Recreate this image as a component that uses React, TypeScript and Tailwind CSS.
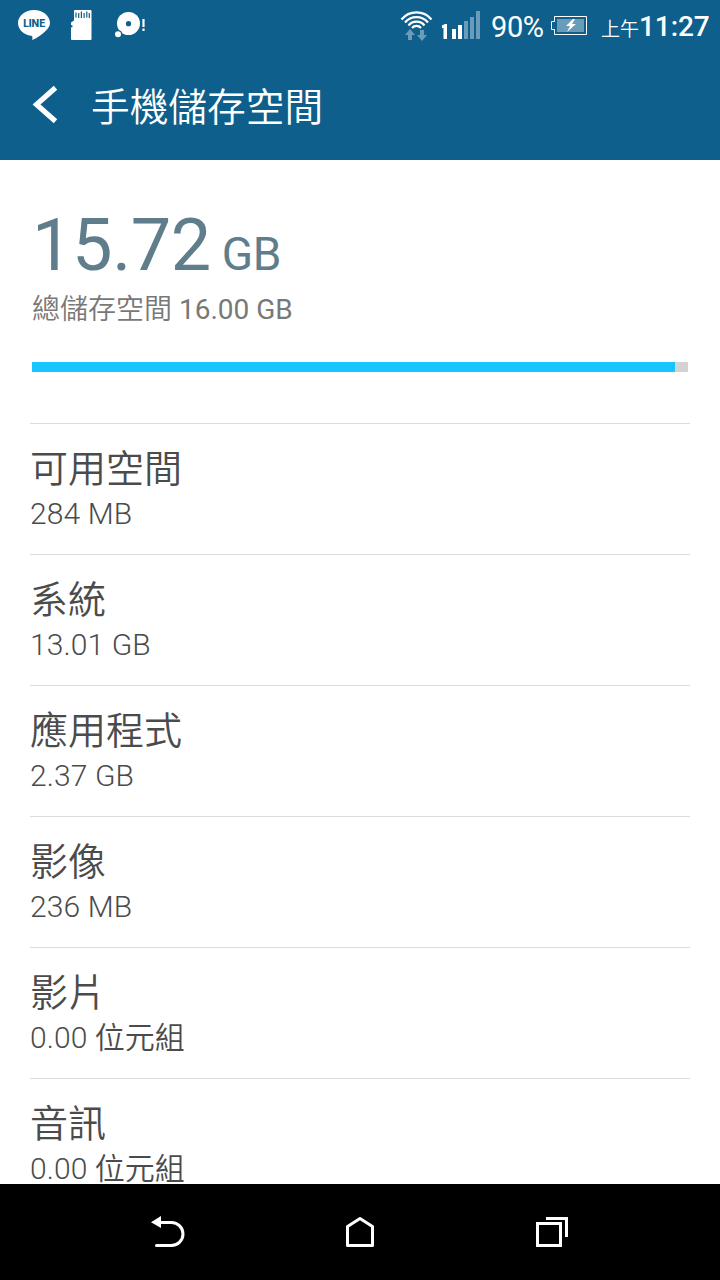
import { type ReactNode } from "react";

const rows = [
  { title: "可用空間", value: "284 MB" },
  { title: "系統", value: "13.01 GB" },
  { title: "應用程式", value: "2.37 GB" },
  { title: "影像", value: "236 MB" },
  { title: "影片", value: "0.00", unit: "位元組" },
  { title: "音訊", value: "0.00", unit: "位元組" },
];

type IconProps = {
  width: number;
  height: number;
  className?: string;
  children: ReactNode;
};

function Icon({ width, height, className, children }: IconProps) {
  return (
    <svg
      width={width}
      height={height}
      viewBox={`0 0 ${width} ${height}`}
      className={`shrink-0 ${className ?? ""}`}
      fill="none"
    >
      {children}
    </svg>
  );
}

function StatusBar() {
  return (
    <div className="flex h-[50px] items-start text-white">
      <Icon width={150} height={50}>
        {/* LINE */}
        <path
          d="M34 10c-8.800 0-16 5.800-16 13 0 6.500 5.500 11.700 13.200 12.700 1.500.4 1.400 1.600 1 4.300 5-2.200 10.600-5.600 14.400-10 2.200-2.300 3.400-4.600 3.400-7 0-7.200-7.200-13-16-13z"
          fill="white"
        />
        <text
          x="34.200"
          y="27"
          textAnchor="middle"
          textLength="22"
          lengthAdjust="spacingAndGlyphs"
          fontSize="9.800"
          fontWeight="800"
          fontFamily="Inter, sans-serif"
          fill="#0e5f8c"
        >
          LINE
        </text>
        {/* sd card */}
        <path
          d="M75 10h15.500a1 1 0 0 1 1 1v28a1 1 0 0 1-1 1H72a1 1 0 0 1-1-1V27.500l1.500-.5v-1.500L71 25v-2.500l3-2V11a1 1 0 0 1 1-1z"
          fill="white"
        />
        <path
          d="M76 12.500v5M78.700 13v5M81.400 11.500v6.500M84.100 13v5M86.800 11.500v6M89.300 13v5"
          stroke="#0e5f8c"
          strokeWidth="1.200"
        />
        {/* disk warning */}
        <circle cx="128.500" cy="23.500" r="11.500" fill="white" />
        <circle cx="128.500" cy="23.700" r="2.600" fill="#0e5f8c" />
        <circle cx="118" cy="34.300" r="4.300" fill="#0e5f8c" />
        <circle cx="118" cy="34.300" r="3" fill="white" />
        <path d="M143.500 19v8M143.500 28.500v2.500" stroke="white" strokeWidth="2.200" />
      </Icon>
      <Icon width={90} height={50} className="ml-[250px]">
        {/* wifi */}
        <path
          d="M1.500 19.500a19.500 19.500 0 0 1 30 0M5 22.500a15 15 0 0 1 23 0M8.500 25.500a10.300 10.300 0 0 1 16 0M12 28a6 6 0 0 1 9 0"
          stroke="white"
          strokeWidth="2.200"
        />
        <path d="M10 29l5 6h-3v5H8v-5H5zM22 41l-5-6h3v-5h4v5h3z" fill="#6a9cba" />
        {/* signal */}
        <path d="M42 25.500l3-1.500H47v15h-3.500V28H42z" fill="white" />
        <path d="M52 29h4v10h-4zM58 25h4v14h-4z" fill="white" />
        <path d="M64 21h4v18h-4zM70 17h4v22h-4zM76 11h4v28h-4z" fill="#6a9cba" />
      </Icon>
      <span className="ml-[1px] mt-[10px] w-[60px] text-[29px] leading-[34px] tracking-[-0.4px]">
        90%
      </span>
      <Icon width={38} height={50}>
        <path
          d="M3.500 16.500h32v18h-32v-5h-3v-8h3z"
          stroke="white"
          strokeWidth="1"
        />
        <path d="M6 19h27v13H6z" fill="#6a9cba" />
        <path d="M22 19l-7 7h4l-3 6 9-8h-4l3-5z" fill="white" />
      </Icon>
      <span className="ml-[12px] mt-[17px] text-[19px] font-[350] leading-[26px]">
        上午
      </span>
      <span className="mt-[10px] text-[28px] font-medium leading-[34px] tracking-[-0.1px]">
        11:27
      </span>
    </div>
  );
}

function TitleBar() {
  return (
    <div className="flex h-[110px] items-start text-white">
      <Icon width={90} height={110}>
        <path d="M55.500 37.700L36.500 54.500L55.500 71.300" stroke="white" strokeWidth="5.200" />
      </Icon>
      <h1 className="ml-[1px] mt-[30px] text-[38.700px] font-[350] leading-[56px]">
        手機儲存空間
      </h1>
    </div>
  );
}

function Summary() {
  return (
    <section className="h-[263px] px-8 pt-11">
      <div className="flex items-baseline text-[#607d8b]">
        <span className="text-[72px] leading-[84px] tracking-[-0.4px]">15.72</span>
        <span className="ml-[11px] text-[46px] leading-[54px] tracking-[-0.4px]">GB</span>
      </div>
      <p className="mt-[2px] text-[28px] leading-[40px] text-[#787878]">
        <span className="font-[350]">總儲存空間</span> 16.00 GB
      </p>
      <div className="mt-8 h-[10px] bg-[#d3d3d3]">
        <div className="h-full w-[643px] bg-[#19c5ff]" />
      </div>
    </section>
  );
}

type StorageRowProps = {
  title: string;
  value: string;
  unit?: string;
};

function StorageRow({ title, value, unit }: StorageRowProps) {
  return (
    <li className="h-[131px] border-t border-[#dcdcdc] pt-[17px] text-[#4b4b4b]">
      <div className="text-[38px] font-[350] leading-[56px]">{title}</div>
      <div className="-mt-px text-[30px] font-light leading-[35px] tracking-[0.1px]">
        {value}
        {unit && <span className="font-[350] tracking-normal"> {unit}</span>}
      </div>
    </li>
  );
}

function NavBar() {
  return (
    <nav className="flex h-24 shrink-0 justify-center bg-black">
      <Icon width={192} height={96}>
        <path
          d="M88 38.500h11.500a11.500 11.500 0 0 1 0 23H84.500"
          stroke="white"
          strokeWidth="3"
          strokeLinecap="round"
        />
        <path d="M79 38.300L89 32v12z" fill="white" />
      </Icon>
      <Icon width={192} height={96}>
        <path
          d="M83.500 61.500V42.500L96 34.500L108.500 42.500V61.500z"
          stroke="white"
          strokeWidth="3"
          strokeLinejoin="round"
        />
      </Icon>
      <Icon width={192} height={96}>
        <path
          d="M81.500 39.500h23v22h-23zM90 34.500h20.500v18.500"
          stroke="white"
          strokeWidth="3"
        />
      </Icon>
    </nav>
  );
}

function App() {
  return (
    <div className="flex h-[1280px] w-[720px] flex-col overflow-hidden bg-white font-[Roboto,'Noto_Sans_CJK_TC',sans-serif]">
      <header className="h-40 shrink-0 bg-[#0e5f8c]">
        <StatusBar />
        <TitleBar />
      </header>
      <main className="min-h-0 flex-1 overflow-hidden">
        <Summary />
        <ul className="mx-[30px]">
          {rows.map((row) => (
            <StorageRow key={row.title} {...row} />
          ))}
        </ul>
      </main>
      <NavBar />
    </div>
  );
}

export default App;
